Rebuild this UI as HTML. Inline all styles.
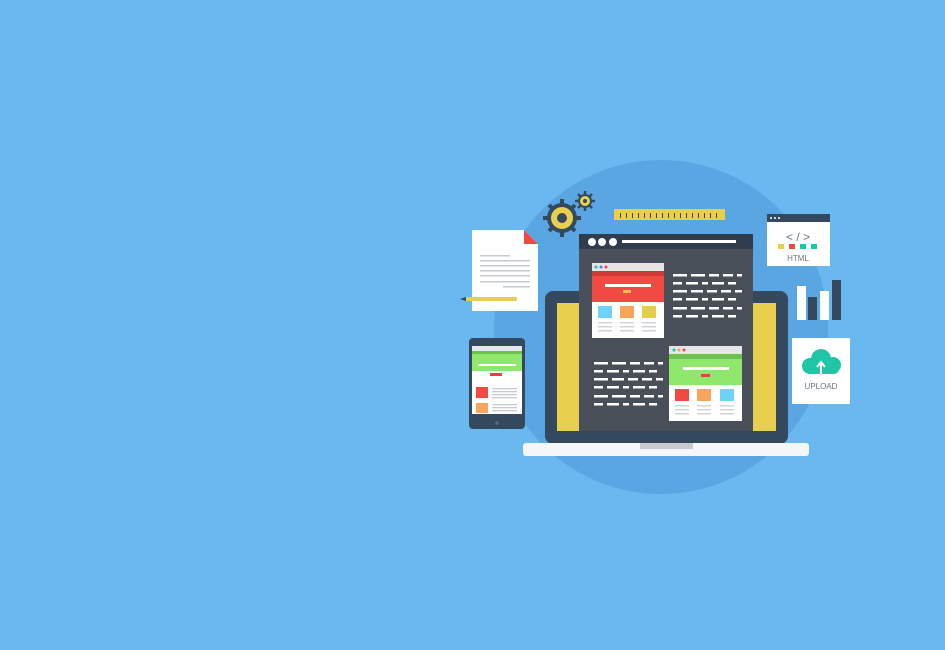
<!DOCTYPE html>
<html><head><style>html,body{margin:0;padding:0;background:#6ab8f0;width:945px;height:650px;overflow:hidden}</style></head>
<body>
<svg width="945" height="650" viewBox="0 0 945 650" xmlns="http://www.w3.org/2000/svg" font-family="Liberation Sans, sans-serif">
<rect width="945" height="650" fill="#6ab8f0"/>
<circle cx="661" cy="327" r="167" fill="#5aa6e2"/>
<!-- laptop -->
<rect x="545" y="291" width="243" height="153" rx="8" fill="#34495e"/>
<rect x="557" y="303" width="219" height="128" fill="#e8d04e"/>
<rect x="523" y="443" width="286" height="13" rx="3" fill="#f4f6f8"/>
<rect x="640" y="443" width="53" height="6" fill="#c5cbd1"/>
<!-- screen panel -->
<rect x="579" y="234" width="174" height="197" fill="#4a5059"/>
<rect x="579" y="234" width="174" height="15" fill="#2f3d4c"/>
<circle cx="592" cy="242" r="4" fill="#fff"/><circle cx="602" cy="242" r="4" fill="#fff"/><circle cx="613" cy="242" r="4" fill="#fff"/>
<rect x="622" y="240" width="114" height="3" fill="#fff"/>
<!-- red window -->
<rect x="592" y="263" width="72" height="75" fill="#fff"/>
<rect x="592" y="263" width="72" height="8" fill="#e4e6e8"/>
<circle cx="596" cy="267" r="1.5" fill="#1fc6a6"/><circle cx="601" cy="267" r="1.5" fill="#3b8fd9"/><circle cx="606" cy="267" r="1.5" fill="#ef4b4b"/>
<rect x="592" y="271" width="72" height="31" fill="#f04a43"/>
<rect x="592" y="271" width="72" height="5" fill="#cf3a35"/>
<rect x="605" y="284" width="46" height="3" fill="#fff"/>
<rect x="623" y="290" width="8" height="3" fill="#f6c24e"/>
<rect x="598" y="306" width="14" height="12" fill="#6fd3f7"/><rect x="620" y="306" width="14" height="12" fill="#f7a45c"/><rect x="642" y="306" width="14" height="12" fill="#e2ce4a"/>
<g fill="#d0d4d8"><rect x="598" y="322" width="14" height="1.5"/><rect x="620" y="322" width="14" height="1.5"/><rect x="642" y="322" width="14" height="1.5"/><rect x="598" y="326" width="14" height="1.5"/><rect x="620" y="326" width="14" height="1.5"/><rect x="642" y="326" width="14" height="1.5"/><rect x="598" y="330" width="14" height="1.5"/><rect x="620" y="330" width="14" height="1.5"/><rect x="642" y="330" width="14" height="1.5"/></g>
<!-- green window -->
<rect x="669" y="346" width="73" height="75" fill="#fff"/>
<rect x="669" y="346" width="73" height="8" fill="#e4e6e8"/>
<circle cx="674" cy="350" r="1.5" fill="#1fc6a6"/><circle cx="679" cy="350" r="1.5" fill="#f7a45c"/><circle cx="684" cy="350" r="1.5" fill="#ef4b4b"/>
<rect x="669" y="354" width="73" height="31" fill="#8fe86c"/>
<rect x="669" y="354" width="73" height="5" fill="#6cc24a"/>
<rect x="683" y="367" width="46" height="3" fill="#fff"/>
<rect x="701" y="374" width="9" height="3" fill="#e94040"/>
<rect x="675" y="389" width="14" height="12" fill="#f04a43"/><rect x="697" y="389" width="14" height="12" fill="#f7a45c"/><rect x="720" y="389" width="14" height="12" fill="#6fd3f7"/>
<g fill="#d0d4d8"><rect x="675" y="405" width="14" height="1.5"/><rect x="697" y="405" width="14" height="1.5"/><rect x="720" y="405" width="14" height="1.5"/><rect x="675" y="409" width="14" height="1.5"/><rect x="697" y="409" width="14" height="1.5"/><rect x="720" y="409" width="14" height="1.5"/><rect x="675" y="413" width="14" height="1.5"/><rect x="697" y="413" width="14" height="1.5"/><rect x="720" y="413" width="14" height="1.5"/></g>
<!-- code lines -->
<g fill="#fff">
<rect x="673" y="274" width="14" height="2.5"/><rect x="691" y="274" width="14" height="2.5"/><rect x="709" y="274" width="10" height="2.5"/><rect x="723" y="274" width="10" height="2.5"/><rect x="737" y="274" width="5" height="2.5"/>
<rect x="673" y="282" width="9" height="2.5"/><rect x="686" y="282" width="12" height="2.5"/><rect x="702" y="282" width="6" height="2.5"/><rect x="712" y="282" width="12" height="2.5"/><rect x="728" y="282" width="8" height="2.5"/>
<rect x="673" y="290" width="14" height="2.5"/><rect x="691" y="290" width="12" height="2.5"/><rect x="707" y="290" width="10" height="2.5"/><rect x="721" y="290" width="10" height="2.5"/><rect x="735" y="290" width="7" height="2.5"/>
<rect x="673" y="298" width="9" height="2.5"/><rect x="686" y="298" width="12" height="2.5"/><rect x="702" y="298" width="6" height="2.5"/><rect x="712" y="298" width="12" height="2.5"/><rect x="728" y="298" width="8" height="2.5"/>
<rect x="673" y="307" width="14" height="2.5"/><rect x="691" y="307" width="14" height="2.5"/><rect x="709" y="307" width="10" height="2.5"/><rect x="723" y="307" width="10" height="2.5"/><rect x="737" y="307" width="5" height="2.5"/>
<rect x="673" y="315" width="9" height="2.5"/><rect x="686" y="315" width="12" height="2.5"/><rect x="702" y="315" width="6" height="2.5"/><rect x="712" y="315" width="12" height="2.5"/><rect x="728" y="315" width="8" height="2.5"/>
<rect x="594" y="362" width="14" height="2.5"/><rect x="612" y="362" width="14" height="2.5"/><rect x="630" y="362" width="10" height="2.5"/><rect x="644" y="362" width="10" height="2.5"/><rect x="658" y="362" width="5" height="2.5"/>
<rect x="594" y="370" width="9" height="2.5"/><rect x="607" y="370" width="12" height="2.5"/><rect x="623" y="370" width="6" height="2.5"/><rect x="633" y="370" width="12" height="2.5"/><rect x="649" y="370" width="8" height="2.5"/>
<rect x="594" y="378" width="14" height="2.5"/><rect x="612" y="378" width="12" height="2.5"/><rect x="628" y="378" width="10" height="2.5"/><rect x="642" y="378" width="10" height="2.5"/><rect x="656" y="378" width="7" height="2.5"/>
<rect x="594" y="386" width="9" height="2.5"/><rect x="607" y="386" width="12" height="2.5"/><rect x="623" y="386" width="6" height="2.5"/><rect x="633" y="386" width="12" height="2.5"/><rect x="649" y="386" width="8" height="2.5"/>
<rect x="594" y="395" width="14" height="2.5"/><rect x="612" y="395" width="14" height="2.5"/><rect x="630" y="395" width="10" height="2.5"/><rect x="644" y="395" width="10" height="2.5"/><rect x="658" y="395" width="5" height="2.5"/>
<rect x="594" y="403" width="9" height="2.5"/><rect x="607" y="403" width="12" height="2.5"/><rect x="623" y="403" width="6" height="2.5"/><rect x="633" y="403" width="12" height="2.5"/><rect x="649" y="403" width="8" height="2.5"/>
</g>
<!-- tablet -->
<rect x="469" y="338" width="56" height="91" rx="4" fill="#34495e"/>
<rect x="472" y="346" width="50" height="68" fill="#fff"/>
<rect x="472" y="346" width="50" height="5" fill="#e4e6e8"/>
<rect x="472" y="351" width="50" height="20" fill="#8fe86c"/>
<rect x="472" y="351" width="50" height="3" fill="#6cc24a"/>
<rect x="478" y="364" width="38" height="2" fill="#fff"/>
<rect x="490" y="373" width="12" height="3" fill="#e94040"/>
<rect x="476" y="387" width="12" height="11" fill="#f04a43"/><rect x="476" y="403" width="12" height="10" fill="#f7a45c"/>
<g fill="#c5cbd1"><rect x="492" y="388" width="25" height="1.3"/><rect x="492" y="391" width="25" height="1.3"/><rect x="492" y="394" width="25" height="1.3"/><rect x="492" y="397" width="25" height="1.3"/><rect x="492" y="404" width="25" height="1.3"/><rect x="492" y="407" width="25" height="1.3"/><rect x="492" y="410" width="25" height="1.3"/></g>
<circle cx="497" cy="423" r="1.8" fill="#5a6b7b"/>
<!-- doc -->
<path d="M472 230 H524 L538 244 V311 H472 Z" fill="#fff"/>
<path d="M524 230 L538 244 H524 Z" fill="#f04a43"/>
<g fill="#c5cbd1"><rect x="480" y="255" width="30" height="1.5"/><rect x="480" y="260" width="50" height="1.5"/><rect x="480" y="265" width="50" height="1.5"/><rect x="480" y="270" width="50" height="1.5"/><rect x="480" y="275" width="50" height="1.5"/><rect x="480" y="281" width="50" height="1.5"/><rect x="503" y="286" width="27" height="1.5"/></g>
<rect x="466" y="297" width="51" height="4" fill="#e8d04e"/>
<path d="M460 299 L466 297 V301 Z" fill="#34495e"/>
<!-- gears -->
<g fill="#34495e">
<circle cx="562" cy="218" r="15"/>
<g stroke="#34495e" stroke-width="4"><line x1="562" y1="199" x2="562" y2="237"/><line x1="543" y1="218" x2="581" y2="218"/><line x1="549" y1="205" x2="575" y2="231"/><line x1="575" y1="205" x2="549" y2="231"/></g>
<circle cx="585" cy="201" r="7"/>
<g stroke="#34495e" stroke-width="2.5"><line x1="585" y1="191" x2="585" y2="211"/><line x1="575" y1="201" x2="595" y2="201"/><line x1="578" y1="194" x2="592" y2="208"/><line x1="592" y1="194" x2="578" y2="208"/></g>
</g>
<circle cx="562" cy="218" r="11" fill="#e8d04e"/><circle cx="562" cy="218" r="5" fill="#34495e"/>
<circle cx="585" cy="201" r="5" fill="#e8d04e"/><circle cx="585" cy="201" r="2" fill="#34495e"/>
<!-- ruler -->
<rect x="614" y="209" width="111" height="11" fill="#e8d04e"/>
<g fill="#34495e"><rect x="620" y="213" width="1" height="5"/><rect x="626" y="213" width="1" height="5"/><rect x="632" y="213" width="1" height="5"/><rect x="638" y="213" width="1" height="5"/><rect x="644" y="213" width="1" height="5"/><rect x="650" y="213" width="1" height="5"/><rect x="656" y="213" width="1" height="5"/><rect x="662" y="213" width="1" height="5"/><rect x="668" y="213" width="1" height="5"/><rect x="674" y="213" width="1" height="5"/><rect x="680" y="213" width="1" height="5"/><rect x="686" y="213" width="1" height="5"/><rect x="692" y="213" width="1" height="5"/><rect x="698" y="213" width="1" height="5"/><rect x="704" y="213" width="1" height="5"/><rect x="710" y="213" width="1" height="5"/><rect x="716" y="213" width="1" height="5"/></g>
<!-- html card -->
<rect x="767" y="214" width="63" height="52" fill="#fff"/>
<rect x="767" y="214" width="63" height="8" fill="#34495e"/>
<circle cx="771" cy="218" r="1" fill="#fff"/><circle cx="775" cy="218" r="1" fill="#fff"/><circle cx="779" cy="218" r="1" fill="#fff"/>
<text x="798" y="241" font-size="12" fill="#6b7580" text-anchor="middle">&lt; / &gt;</text>
<rect x="778" y="244" width="6" height="5" fill="#e8d04e"/><rect x="789" y="244" width="6" height="5" fill="#f04a43"/><rect x="800" y="244" width="6" height="5" fill="#1fc6a6"/><rect x="811" y="244" width="6" height="5" fill="#1fc6a6"/>
<text x="798" y="261" font-size="8" fill="#6b7580" text-anchor="middle">HTML</text>
<!-- bars -->
<rect x="797" y="286" width="9" height="34" fill="#fff"/>
<rect x="808" y="297" width="9" height="23" fill="#34495e"/>
<rect x="820" y="291" width="9" height="29" fill="#fff"/>
<rect x="832" y="280" width="9" height="40" fill="#34495e"/>
<!-- upload -->
<rect x="792" y="338" width="58" height="66" fill="#fff"/>
<g fill="#1fc6a6"><circle cx="810" cy="366" r="8"/><circle cx="821" cy="359" r="10"/><circle cx="833" cy="365" r="8"/><rect x="806" y="364" width="33" height="10" rx="5"/></g>
<path d="M821 377 V362 M817 367 L821 362 L825 367" stroke="#fff" stroke-width="2" fill="none"/>
<text x="821" y="389" font-size="8" fill="#6b7580" text-anchor="middle">UPLOAD</text>
</svg>
</body></html>
